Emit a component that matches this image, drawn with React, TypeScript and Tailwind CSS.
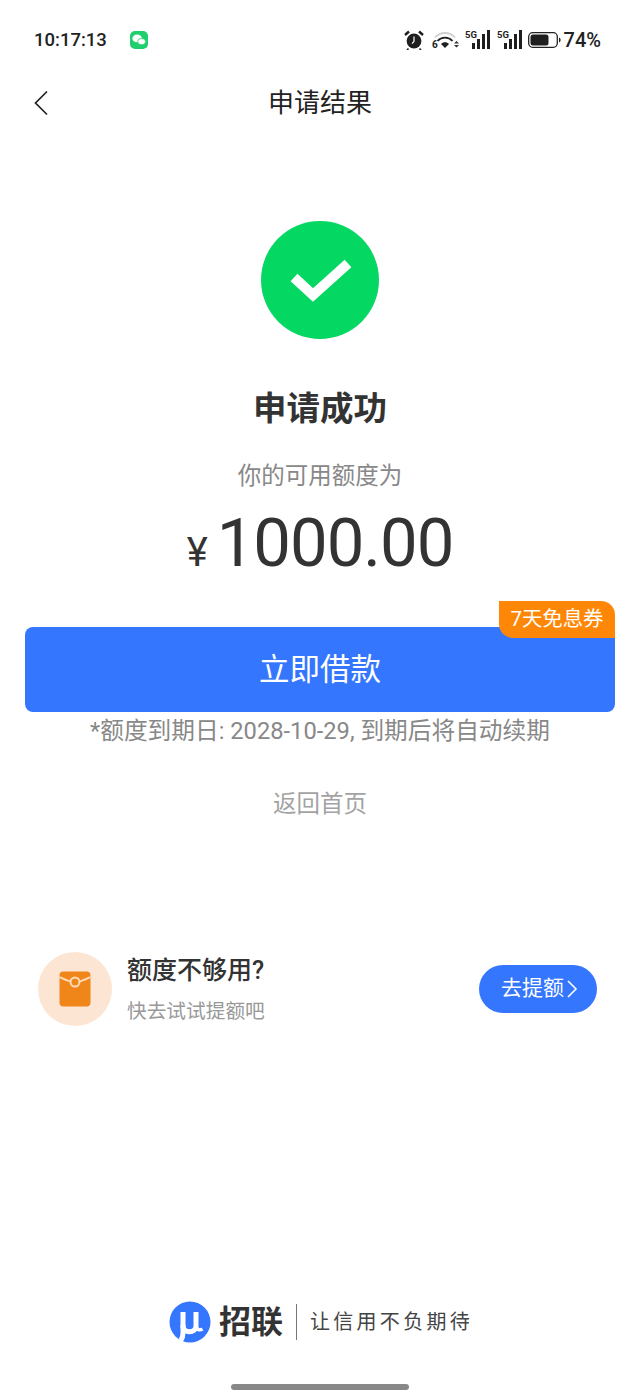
const FONT = "font-['Roboto','Noto_Sans_CJK_SC',sans-serif]";

// ─── Status bar ─────────────────────────────────────

function SignalIcon() {
  return (
    <svg width="26" height="20" viewBox="0 0 26 20" fill="#1f1f1f">
      <text x="0" y="8" fontSize="9.5" fontWeight="700" fontFamily="Roboto, sans-serif">
        5G
      </text>
      <rect x="7" y="13" width="3" height="6" />
      <rect x="12" y="9" width="3" height="10" />
      <rect x="17" y="4" width="3" height="15" />
      <rect x="22" y="0" width="3" height="19" />
    </svg>
  );
}

function StatusBar() {
  return (
    <div className="flex h-[80px] items-center pl-[34px] pr-[39px]">
      <span className="text-[18.5px] font-medium leading-none text-[#222]">10:17:13</span>
      <svg className="ml-[23px]" width="18" height="18" viewBox="0 0 18 18">
        <rect width="18" height="18" rx="5" fill="#1fcf6e" />
        <ellipse cx="7.2" cy="7.4" rx="4.8" ry="3.9" fill="#fff" />
        <ellipse cx="11.6" cy="10.6" rx="4" ry="3.2" fill="#fff" stroke="#1fcf6e" strokeWidth="0.8" />
      </svg>
      <div className="ml-auto flex items-center">
        <svg width="20" height="20" viewBox="0 0 20 20">
          <circle cx="10" cy="11" r="7.4" fill="#1f1f1f" />
          <path d="M1 5l4-3.5M19 5l-4-3.5" stroke="#1f1f1f" strokeWidth="2.4" />
          <path d="M4.5 18.5l-1.5 1.5M15.5 18.5l1.5 1.5" stroke="#1f1f1f" strokeWidth="1.6" />
          <path d="M10 6.5v4.8l-2 2.4" stroke="#fff" strokeWidth="1.2" fill="none" />
        </svg>
        <svg className="ml-[8px]" width="27" height="20" viewBox="0 0 27 20" fill="none">
          <text x="0" y="18" fontSize="10" fontWeight="700" fill="#222" fontFamily="Roboto, sans-serif">
            6
          </text>
          <path d="M3 7.5c5.5-6 14.5-6 20 0" stroke="#cfcfcf" strokeWidth="1.8" />
          <path d="M5.5 11c4-4.4 11-4.4 15 0" stroke="#1f1f1f" strokeWidth="1.8" />
          <path d="M9 14c2.3-2.4 5.7-2.4 8 0l-4 4z" fill="#1f1f1f" />
          <path d="M22 13.5l2.5-2.5 2.5 2.5zM22 15l2.5 2.5L27 15z" fill="#333" />
        </svg>
        <div className="ml-[6px] flex items-center gap-[6px]">
          <SignalIcon />
          <SignalIcon />
        </div>
        <svg className="ml-[5px]" width="33" height="20" viewBox="0 0 33 20">
          <rect x="0.7" y="2.7" width="28.6" height="14.6" rx="4" fill="none" stroke="#222" strokeWidth="1.3" />
          <rect x="2.5" y="4.5" width="18" height="11" rx="2.5" fill="#1f1f1f" />
          <path d="M31 7.5c1.2.6 1.6 1.4 1.6 2.5s-.4 1.9-1.6 2.5z" fill="#222" />
        </svg>
        <span className="ml-[3px] text-[20px] font-medium leading-none text-[#222]">74%</span>
      </div>
    </div>
  );
}

// ─── Component ──────────────────────────────────────

export default function App() {
  return (
    <div className={`${FONT} flex h-[1400px] w-[640px] flex-col overflow-hidden bg-white`}>
      <StatusBar />

      {/* Header */}
      <div className="relative flex h-[46px] items-center justify-center">
        <svg className="absolute left-[34px] top-[10px]" width="14" height="26" viewBox="0 0 14 26" fill="none">
          <path d="M13 1.5L1.500 13 13 24.5" stroke="#222" strokeWidth="1.7" />
        </svg>
        <span className="text-[26px] leading-none text-[#222]">申请结果</span>
      </div>

      {/* Result */}
      <div className="mt-[95px] flex flex-col items-center">
        <div className="flex h-[118px] w-[118px] items-center justify-center rounded-full bg-[#05d862]">
          <svg width="64" height="48" viewBox="0 0 64 48" fill="none">
            <path d="M6 21.5L25 39 60 7.5" stroke="#fff" strokeWidth="10" strokeLinejoin="miter" />
          </svg>
        </div>
        <h1 className="mt-[50px] text-[33.5px] font-bold leading-[40px] text-[#333]">申请成功</h1>
        <p className="mt-[30px] text-[23.5px] leading-[34px] text-[#888]">你的可用额度为</p>
        <div className="mt-[15px] flex h-[70px] items-baseline text-[#333]">
          <span className="mr-[9px] text-[40px] leading-[70px]">¥</span>
          <span className="text-[67px] leading-[70px] tracking-[-1px]">1000.00</span>
        </div>
      </div>

      {/* Loan button */}
      <div className="relative mx-[25px] mt-[49px]">
        <button className="flex h-[85px] w-full items-center justify-center rounded-[8px] bg-[#3476fe] text-[30.5px] text-white">
          立即借款
        </button>
        <span className="absolute right-0 top-[-26px] flex h-[37px] w-[116px] items-center justify-center rounded-tr-[14px] rounded-bl-[14px] bg-[#ff8707] text-[20.4px] leading-none text-white">
          7天免息券
        </span>
      </div>
      <p className="mt-[2px] text-center text-[23.7px] leading-[34px] text-[#888]">
        *额度到期日: 2028-10-29, 到期后将自动续期
      </p>
      <p className="mt-[39px] text-center text-[23.5px] leading-[34px] text-[#a3a3a3]">返回首页</p>

      {/* Limit increase */}
      <div className="mt-[131px] flex items-center pl-[38px] pr-[43px]">
        <div className="flex h-[74px] w-[74px] items-center justify-center rounded-full bg-[#fde5d4]">
          <svg width="32" height="36" viewBox="0 0 32 36">
            <rect x="0.5" y="0.5" width="31" height="35" rx="4" fill="#f0851a" />
            <path d="M0.5 6c6 3 9.5 5 15.5 5s9.5-2 15.5-5" fill="none" stroke="#ffdcb8" strokeWidth="1.8" />
            <circle cx="16" cy="11" r="4.5" fill="#f0851a" stroke="#ffdcb8" strokeWidth="2" />
          </svg>
        </div>
        <div className="ml-[15px]">
          <p className="text-[25px] font-medium leading-[36px] text-[#333]">额度不够用?</p>
          <p className="mt-[9px] text-[19.7px] leading-[28px] text-[#999]">快去试试提额吧</p>
        </div>
        <button className="ml-auto flex h-[48px] w-[118px] items-center justify-center rounded-full bg-[#3476fe] pl-[3px] text-[21px] text-white">
          去提额
          <svg className="ml-[2px]" width="12" height="20" viewBox="0 0 12 20" fill="none">
            <path d="M2 2l8 8-8 8" stroke="#fff" strokeWidth="1.6" />
          </svg>
        </button>
      </div>

      {/* Brand */}
      <div className="mt-auto flex items-center justify-center pl-[2px]">
        <svg width="42" height="42" viewBox="0 0 42 42" fill="none">
          <circle cx="21" cy="21" r="20.5" fill="#3476fe" />
          <path d="M14 11v14c0 7.5 13 7.5 13 0V11" stroke="#fff" strokeWidth="5" />
          <path d="M14 24v8c0 3-.8 5.5-2.2 7.5" stroke="#fff" strokeWidth="5" />
          <path d="M27 24c0 4 3 6 6.5 4" stroke="#fff" strokeWidth="3.5" />
        </svg>
        <span className="ml-[8px] text-[32px] font-bold leading-none text-[#333]">招联</span>
        <span className="ml-[13px] h-[36px] w-px bg-[#777]" />
        <span className="ml-[13px] text-[20px] leading-none tracking-[3.3px] text-[#444]">让信用不负期待</span>
      </div>
      <div className="mx-auto mb-[10px] mt-[41px] h-[6px] w-[178px] rounded-full bg-[#888]" />
    </div>
  );
}
